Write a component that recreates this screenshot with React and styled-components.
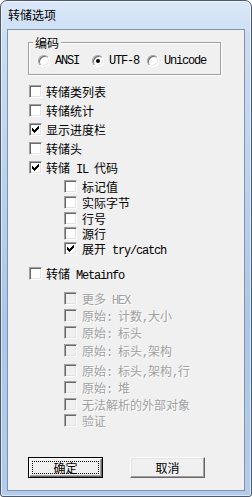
import React from 'react';
import styled, { createGlobalStyle } from 'styled-components';

const Global = createGlobalStyle`
  html, body { margin: 0; padding: 0; background: #fff; }
  body { font-family: "Noto Sans CJK SC", sans-serif; font-size: 12px; color: #000; }
`;

const Window = styled.div`
  box-sizing: border-box;
  width: 252px;
  height: 497px;
  border: 1px solid #4d5a6b;
  border-radius: 7px 7px 3px 3px;
  background: linear-gradient(180deg, #dbe8f8 0%, #cadcf3 8%, #bcd3ee 35%, #abc7e9 65%, #b3cceb 100%);
  box-shadow: inset 0 0 0 1px rgba(255, 255, 255, 0.55);
  display: flex;
  flex-direction: column;
  padding: 0 6px 5px 6px;
  overflow: hidden;
`;

const TitleBar = styled.div`
  box-sizing: border-box;
  height: 28px;
  padding: 8px 0 0 1px;
  font: 12px/12px "Noto Sans CJK SC", sans-serif;
  color: #000;
`;

const Client = styled.div`
  box-sizing: border-box;
  height: 462px;
  border: 1px solid #7f93ad;
  background: #f0f0f0;
  display: flex;
  flex-direction: column;
  padding-left: 20px;
`;

const GroupBox = styled.div`
  position: relative;
  box-sizing: border-box;
  margin-top: 12px;
  width: 193px;
  height: 33px;
  border: 1px solid #a0a0a0;
  box-shadow: inset 1px 1px 0 #fff, 1px 1px 0 #fff;
  padding: 12px 0 0 9px;
  display: flex;
`;

const GroupLabel = styled.span`
  position: absolute;
  top: -7px;
  left: 4px;
  padding: 0 2px;
  background: #f0f0f0;
  font: 12px/14px "Noto Sans CJK SC", sans-serif;
`;

const RadioItem = styled.label`
  display: flex;
  align-items: center;
  gap: 5px;
  width: ${(p) => p.$w}px;
  height: 12px;
  font: 12px/12px "Noto Sans CJK SC", sans-serif;
`;

const RadioCircle = styled.span`
  position: relative;
  flex: none;
  box-sizing: border-box;
  width: 12px;
  height: 12px;
  border-radius: 50%;
  border: 1px solid;
  border-color: #a0a0a0 #fff #fff #a0a0a0;
  box-shadow: inset 1px 1px 0 #696969, inset -1px -1px 0 #e3e3e3;
  background: #fff;
  &::after {
    content: "";
    display: ${(p) => (p.$checked ? 'block' : 'none')};
    position: absolute;
    left: 3px;
    top: 3px;
    width: 4px;
    height: 4px;
    border-radius: 50%;
    background: #000;
  }
`;

const Lat = styled.span`
  font-family: "Liberation Mono", monospace;
  font-size: 12px;
  letter-spacing: -1.2px;
  white-space: pre;
`;

const List = styled.div`
  display: flex;
  flex-direction: column;
  margin-top: ${(p) => p.$mt || 0}px;
`;

const Row = styled.div`
  display: flex;
  align-items: flex-start;
  gap: ${(p) => p.$gap}px;
  height: ${(p) => p.$h}px;
  margin-left: ${(p) => p.$indent}px;
`;

const Box = styled.span`
  flex: none;
  display: flex;
  box-sizing: border-box;
  width: 13px;
  height: 13px;
  padding: 2px;
  border: 1px solid;
  border-color: #a0a0a0 #fff #fff #a0a0a0;
  box-shadow: inset 1px 1px 0 #696969, inset -1px -1px 0 #e3e3e3;
  background: ${(p) => (p.$disabled ? '#f0f0f0' : '#fff')};
`;

const Label = styled.span`
  font: 12px/13px "Noto Sans CJK SC", sans-serif;
  white-space: nowrap;
  color: ${(p) => (p.$disabled ? '#a0a0a0' : '#000')};
  text-shadow: ${(p) => (p.$disabled ? '1px 1px 0 #fff' : 'none')};
`;

const ButtonRow = styled.div`
  display: flex;
  gap: 27px;
  margin-top: 27px;
`;

const Button = styled.button`
  position: relative;
  box-sizing: border-box;
  width: 75px;
  height: 21px;
  padding: 0;
  margin: 0;
  background: #f0f0f0;
  font: 12px/12px "Noto Sans CJK SC", sans-serif;
  color: #000;
  border: 1px solid;
  border-color: ${(p) => (p.$default ? '#000' : '#fff #696969 #696969 #fff')};
  box-shadow: ${(p) =>
    p.$default
      ? 'inset 1px 1px 0 #fff, inset -1px -1px 0 #696969, inset -2px -2px 0 #a0a0a0'
      : 'inset -1px -1px 0 #a0a0a0, inset 1px 1px 0 #e3e3e3'};
  &::after {
    content: "";
    display: ${(p) => (p.$default ? 'block' : 'none')};
    position: absolute;
    left: 3px;
    right: 3px;
    top: 3px;
    bottom: 3px;
    border: 1px dotted #000;
  }
`;

const CheckMark = () => (
  <svg width="7" height="7" viewBox="0 0 7 7" shapeRendering="crispEdges">
    <path
      d="M0 2h1v3H0z M1 3h1v3H1z M2 4h1v3H2z M3 3h1v3H3z M4 2h1v3H4z M5 1h1v3H5z M6 0h1v3H6z"
      fill="#000"
    />
  </svg>
);

const Check = ({ checked, disabled, h, indent = 1, gap = 4, children }) => (
  <Row $h={h} $indent={indent} $gap={gap}>
    <Box $disabled={disabled}>{checked && <CheckMark />}</Box>
    <Label $disabled={disabled}>{children}</Label>
  </Row>
);

export default function App() {
  return (
    <>
      <Global />
      <Window>
        <TitleBar>转储选项</TitleBar>
        <Client>
          <GroupBox>
            <GroupLabel>编码</GroupLabel>
            <RadioItem $w={54}>
              <RadioCircle />
              <Lat>ANSI</Lat>
            </RadioItem>
            <RadioItem $w={55}>
              <RadioCircle $checked />
              <Lat>UTF-8</Lat>
            </RadioItem>
            <RadioItem $w={60}>
              <RadioCircle />
              <Lat>Unicode</Lat>
            </RadioItem>
          </GroupBox>

          <List $mt={10}>
            <Check h={19}>转储类列表</Check>
            <Check h={19}>转储统计</Check>
            <Check h={19} checked>显示进度栏</Check>
            <Check h={19}>转储头</Check>
            <Check h={19} checked>
              转储<Lat> IL </Lat>代码
            </Check>
          </List>

          <List>
            <Check h={16} indent={36} gap={5}>标记值</Check>
            <Check h={16} indent={36} gap={5}>实际字节</Check>
            <Check h={15} indent={36} gap={5}>行号</Check>
            <Check h={15} indent={36} gap={5}>源行</Check>
            <Check h={25} indent={36} gap={5} checked>
              展开<Lat> try/catch</Lat>
            </Check>
          </List>

          <List>
            <Check h={25}>
              转储<Lat> Metainfo</Lat>
            </Check>
          </List>

          <List>
            <Check h={17} indent={36} gap={5} disabled>
              更多<Lat> HEX</Lat>
            </Check>
            <Check h={17} indent={36} gap={5} disabled>
              原始<Lat>: </Lat>计数<Lat>,</Lat>大小
            </Check>
            <Check h={18} indent={36} gap={5} disabled>
              原始<Lat>: </Lat>标头
            </Check>
            <Check h={20} indent={36} gap={5} disabled>
              原始<Lat>: </Lat>标头<Lat>,</Lat>架构
            </Check>
            <Check h={17} indent={36} gap={5} disabled>
              原始<Lat>: </Lat>标头<Lat>,</Lat>架构<Lat>,</Lat>行
            </Check>
            <Check h={17} indent={36} gap={5} disabled>
              原始<Lat>: </Lat>堆
            </Check>
            <Check h={16} indent={36} gap={5} disabled>无法解析的外部对象</Check>
            <Check h={16} indent={36} gap={5} disabled>验证</Check>
          </List>

          <ButtonRow>
            <Button $default>确定</Button>
            <Button>取消</Button>
          </ButtonRow>
        </Client>
      </Window>
    </>
  );
}
